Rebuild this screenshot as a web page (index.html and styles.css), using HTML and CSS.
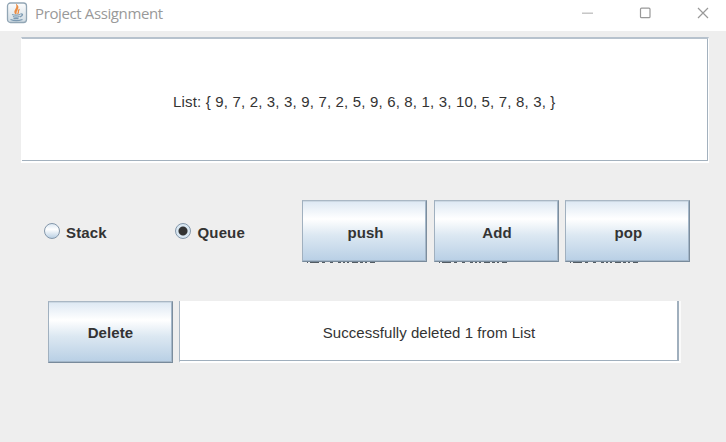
FILE: index.html
```html
<!DOCTYPE html>
<html lang="en">
<head>
<meta charset="utf-8">
<title>Project Assignment</title>
<link rel="stylesheet" href="styles.css">
</head>
<body>
<header class="titlebar">
  <svg class="app-icon" width="22" height="22" viewBox="0 0 22 22">
    <defs><linearGradient id="tile" x2="0" y2="1"><stop stop-color="#fdfdfd"/><stop offset="1" stop-color="#cfdbe3"/></linearGradient></defs>
    <rect x="1.500" y="1" width="19" height="19.5" rx="3" fill="url(#tile)" stroke="#92a6b5" stroke-width="1.3"/>
    <path d="M10 12C6.500 8.500 12 7.500 11 3.500C14 6.500 8.500 8 10 12M11.500 12C14 10 10.500 9.500 13.500 7.200" fill="none" stroke="#eb8d43" stroke-width="1.3"/>
    <path d="M6 12.500Q10 13.700 14 12.500M7 14.500Q10 15.700 13.500 14.500M7.500 16.300Q10 17 12.500 16.300M14.500 12Q17.500 11.700 16 13.600L14 15M4.500 17.500Q10 19.800 16.500 17.500" fill="none" stroke="#7c9ab2" stroke-width="1.3"/>
  </svg>
  <h1>Project Assignment</h1>
  <svg class="controls" width="130" height="26" viewBox="0 0 130 26" fill="none">
    <path d="M2 13.200H13" stroke="#bdbdbd" stroke-width="1.3"/>
    <rect x="60.500" y="8.200" width="9.500" height="9.500" rx="1" stroke="#999" stroke-width="1.2"/>
    <path d="M118 8L128 18M128 8L118 18" stroke="#999" stroke-width="1.2"/>
  </svg>
</header>
<main>
  <section class="field list"><span>List: { 9, 7, 2, 3, 3, 9, 7, 2, 5, 9, 6, 8, 1, 3, 10, 5, 7, 8, 3, }</span></section>
  <section class="row actions">
    <label class="radio"><i class="dot"></i><span>Stack</span></label>
    <label class="radio second"><i class="dot selected"></i><span>Queue</span></label>
    <div class="buttons">
      <div class="cell"><button><span>push</span></button><svg class="residue" width="72" height="2"><path d="M2 .5H3M5 .5H14M17 .5H20M25 .5H28M33 .5H36M38 .5H40M42 .5H44M47 .5H53M55 .5H58M60 .5H62M65 .5H70" stroke="#535c63"/></svg></div>
      <div class="cell"><button><span>Add</span></button><svg class="residue" width="72" height="2"><path d="M2 .5H3M5 .5H14M17 .5H20M25 .5H28M33 .5H36M38 .5H40M42 .5H44M47 .5H53M55 .5H58M60 .5H62M65 .5H70" stroke="#535c63"/></svg></div>
      <div class="cell"><button><span>pop</span></button><svg class="residue" width="72" height="2"><path d="M2 .5H3M5 .5H14M17 .5H20M25 .5H28M33 .5H36M38 .5H40M42 .5H44M47 .5H53M55 .5H58M60 .5H62M65 .5H70" stroke="#535c63"/></svg></div>
    </div>
  </section>
  <section class="row result">
    <button><span>Delete</span></button>
    <div class="field message"><span>Successfully deleted 1 from List</span></div>
  </section>
</main>
</body>
</html>
```
FILE: styles.css
```css
* { box-sizing: border-box; }
body { margin: 0; width: 726px; height: 442px; overflow: hidden; background: #eee; color: #333; font: 15px "Liberation Sans", Arial, sans-serif; }
.titlebar { height: 31px; display: flex; align-items: flex-start; background: #fff; padding: 1px 16px 0 6px; }
.app-icon { margin-top: 1px; flex: none; }
h1 { margin: 2px 0 0 7px; font: 15px/21px "Open Sans", "Noto Sans", sans-serif; letter-spacing: -.38px; color: #999; white-space: nowrap; }
.controls { margin-left: auto; margin-top: -1px; }
main { padding: 6px 17px 0 21px; }
.field { display: flex; align-items: center; justify-content: center; background: #fff; white-space: nowrap; }
.list { height: 126px; border: solid; border-width: 2px 1px 2px; border-color: #b7c2cd #fff #fff; box-shadow: inset -1px -1px #a3b1be; }
.list span { letter-spacing: .17px; transform: translate(-.7px, 1px); }
.row { display: flex; }
.actions { padding: 37px 0 0 22px; height: 138px; font-weight: bold; }
.radio { height: 64px; display: flex; align-items: center; width: 131px; }
.radio.second { width: 128px; }
.radio span { letter-spacing: .15px; }
.dot { width: 16px; height: 16px; border: 1.5px solid #8497aa; border-radius: 50%; margin: -2px 6px 0 1px; background: linear-gradient(#dce8f2, #fff 38%, #b9cfe3); }
.selected { background: radial-gradient(circle, #333 4px, #d9e7f2 5px); }
.selected + span { margin-left: .5px; }
.buttons { display: flex; gap: 6.500px; }
.cell { position: relative; width: 125px; }
button { display: block; width: 125px; height: 62px; padding: 2px 0 0; border: solid; border-width: 1px; border-color: #a9b7c4 #7c8d9d #788a9b #a0b0bf; border-radius: 0; box-shadow: inset -1px -1px #a4b7c9, inset 0 1px #ccd8e3; background: linear-gradient(#dde8f3, #fff 30%, #dce8f2 57%, #b8cfe5); color: #333; font: bold 15px "Liberation Sans", Arial, sans-serif; }
button span { display: block; letter-spacing: .1px; transform: translateX(1px); }
.residue { position: absolute; left: 3px; top: 62px; }
.result { padding-left: 27px; gap: 6px; }
.result button span { transform: translateY(-1px); }
.message { width: 502px; height: 62px; border: solid; border-width: 0 2px 2px 1px; border-color: #fff #fafafa #fff #a8b5c2; box-shadow: inset -2px -1px #a0afbd; }
.message span { letter-spacing: .05px; transform: translate(-.5px, 1px); }
```
